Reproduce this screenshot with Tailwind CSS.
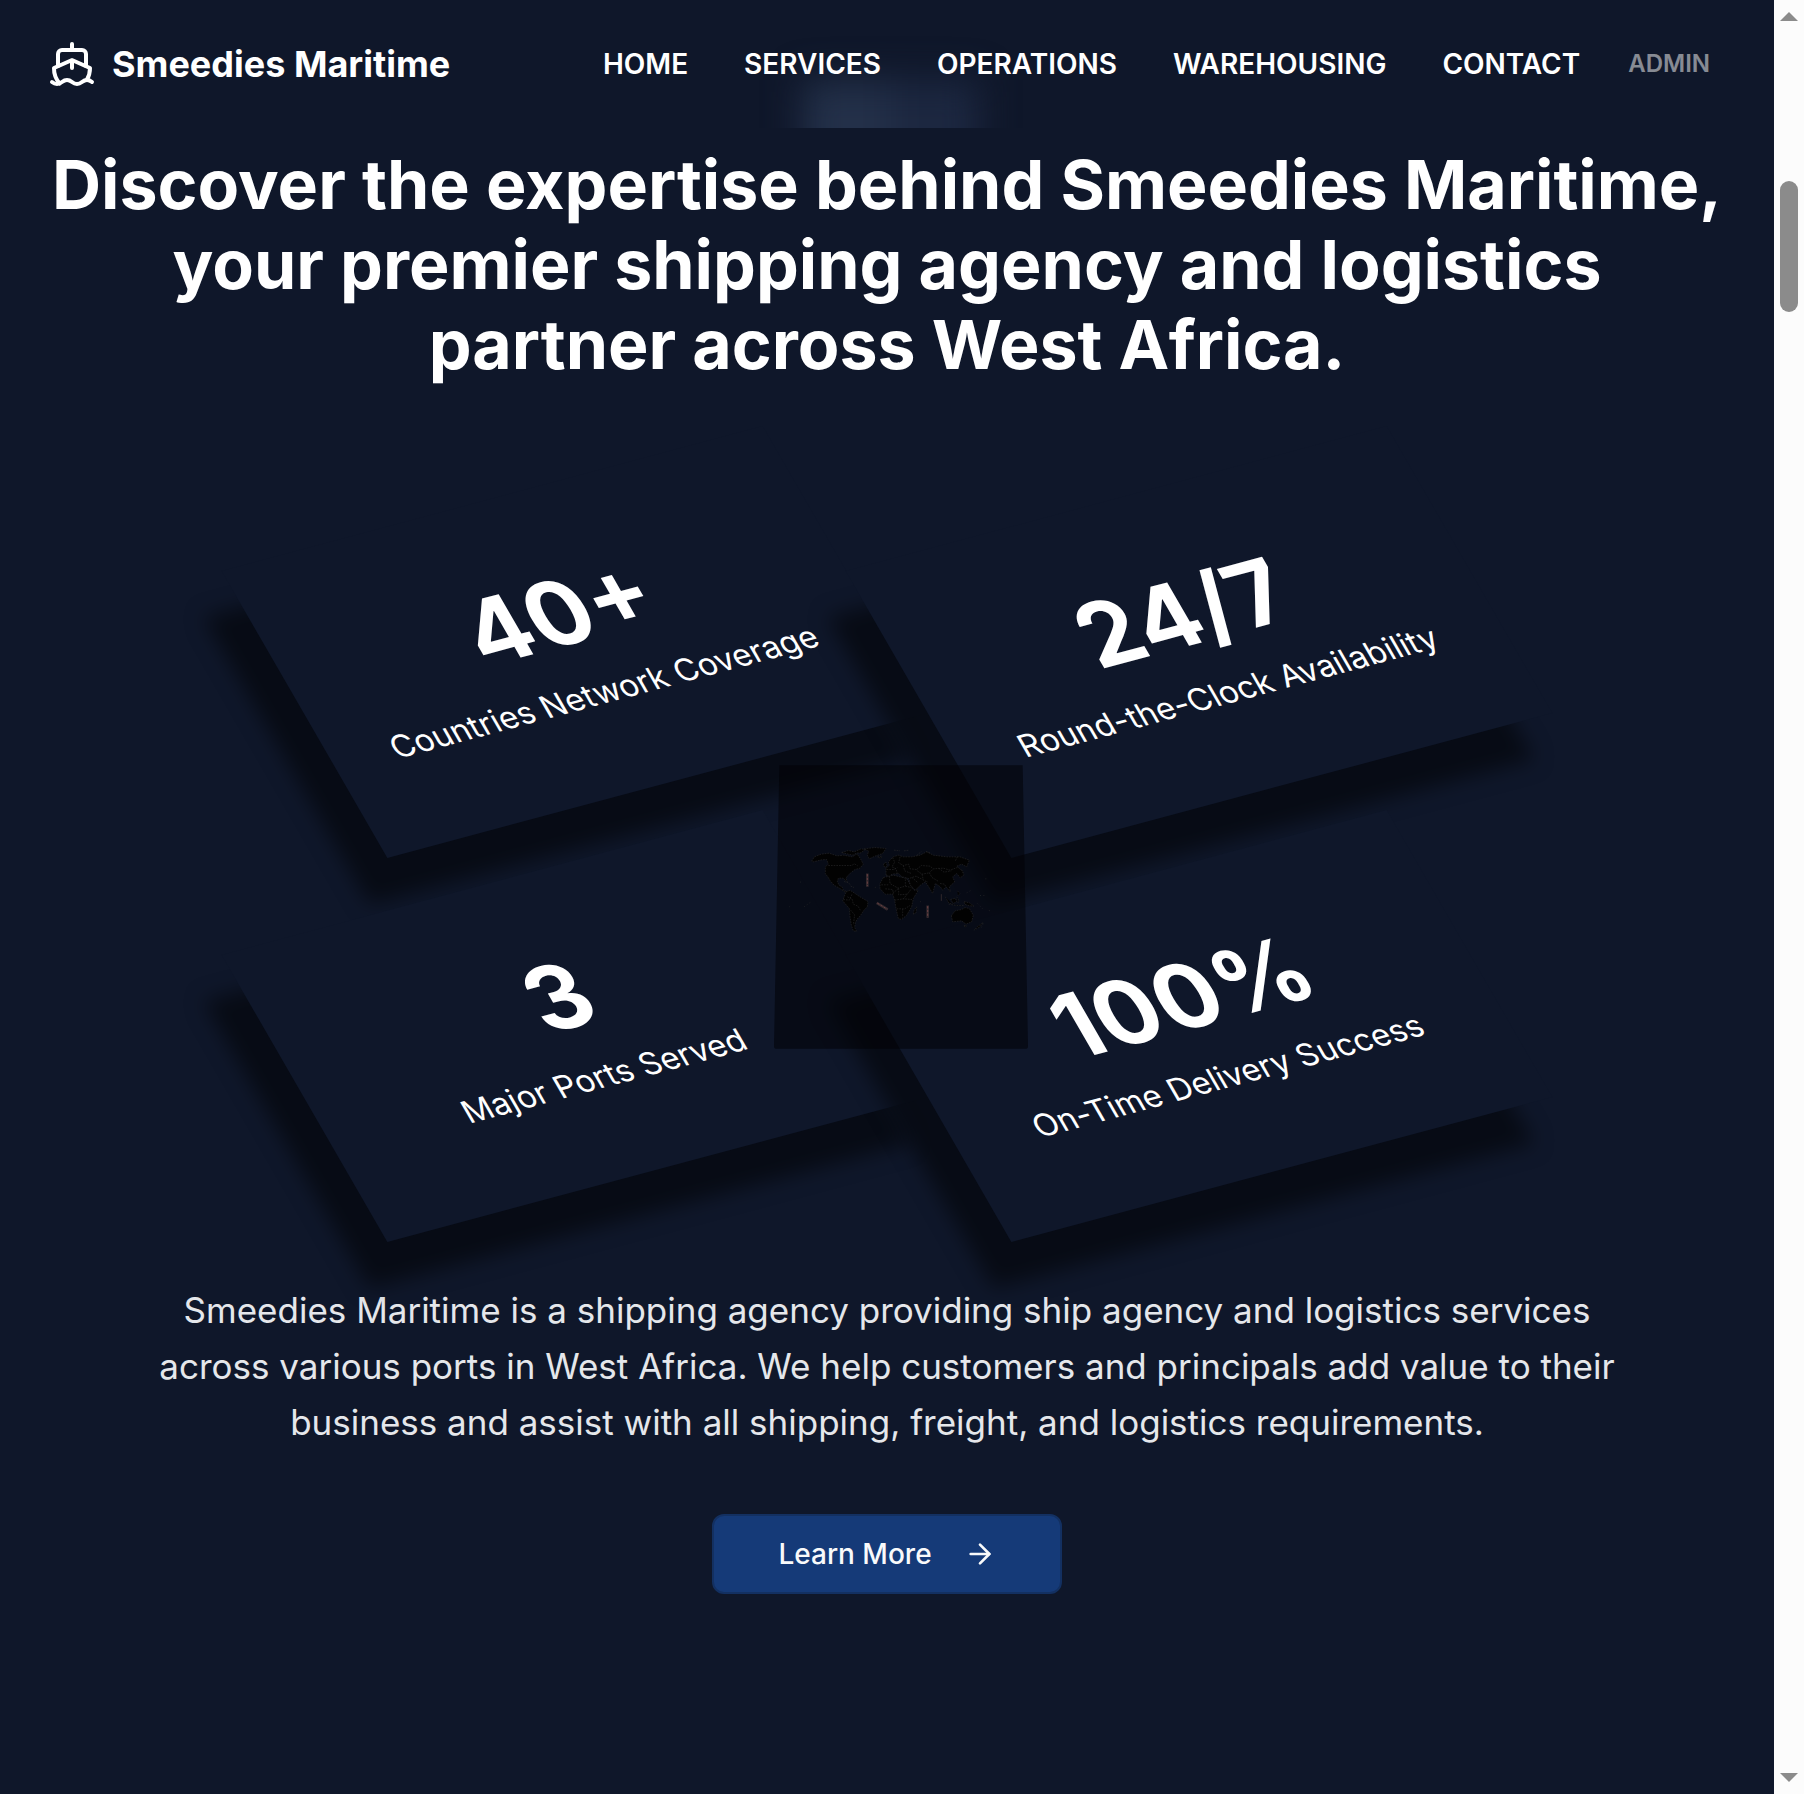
<!DOCTYPE html>
<html lang="en">
<head>
<meta charset="utf-8">
<meta name="viewport" content="width=device-width, initial-scale=1">
<title>Smeedies Maritime</title>
<script src="https://cdn.jsdelivr.net/npm/@tailwindcss/browser@4"></script>
</head>
<body class="flex min-h-screen bg-[#0f172a] font-['Inter',sans-serif] text-white">
<div class="min-w-0 flex-1 overflow-hidden">

  <header class="relative flex h-32 items-center justify-between overflow-hidden pr-16 pl-12">
    <!-- Content scrolled under the bar, seen through its blur -->
    <div class="absolute inset-0 flex items-end justify-center pl-2" aria-hidden="true">
      <div class="flex translate-y-10 blur-[18px]">
        <div class="h-22 w-22 bg-[#233049]"></div>
        <div class="h-22 w-22 bg-[#1c2740]"></div>
      </div>
    </div>
    <a href="#" class="relative flex items-center gap-4 text-4xl font-bold">
      <svg class="size-12" viewBox="0 0 24 24" fill="none" stroke="currentColor" stroke-width="2" stroke-linecap="round" stroke-linejoin="round" aria-hidden="true">
        <path d="M12 10.189V14"/><path d="M12 2v3"/><path d="M19 13V7a2 2 0 0 0-2-2H7a2 2 0 0 0-2 2v6"/>
        <path d="M19.38 20A11.6 11.6 0 0 0 21 14l-8.188-3.639a2 2 0 0 0-1.624 0L3 14a11.6 11.6 0 0 0 2.81 7.76"/>
        <path d="M2 21c.6.5 1.2 1 2.5 1 2.5 0 2.5-2 5-2 1.3 0 1.9.5 2.5 1s1.2 1 2.5 1c2.5 0 2.5-2 5-2 1.3 0 1.9.5 2.5 1"/>
      </svg>
      Smeedies Maritime
    </a>
    <nav class="relative flex items-center gap-14 text-[28px] font-semibold">
      <a href="#">HOME</a>
      <a href="#">SERVICES</a>
      <a href="#">OPERATIONS</a>
      <a href="#">WAREHOUSING</a>
      <div class="flex items-center gap-12">
        <a href="#">CONTACT</a>
        <a href="#" class="text-2xl text-white/50">ADMIN</a>
      </div>
    </nav>
  </header>

  <main class="flex flex-col items-center px-12 pt-4">
    <h1 class="text-center text-[68px] leading-[80px] font-bold">Discover the expertise behind Smeedies Maritime, your premier shipping agency and logistics partner across West Africa.</h1>

    <section class="relative mt-[98px] grid w-full max-w-[1184px] grid-cols-2 gap-16">
      <div class="[transform:rotate(-15deg)_skewX(15deg)] bg-[#0f172a] py-20 text-center shadow-[-40px_40px_20px_rgba(0,0,0,0.5)]">
        <p class="mb-4 text-[92px] leading-[96px] font-bold">40+</p>
        <p class="text-[32px] leading-[48px]">Countries Network Coverage</p>
      </div>
      <div class="[transform:rotate(-15deg)_skewX(15deg)] bg-[#0f172a] py-20 text-center shadow-[-40px_40px_20px_rgba(0,0,0,0.5)]">
        <p class="mb-4 text-[92px] leading-[96px] font-bold">24/7</p>
        <p class="text-[32px] leading-[48px]">Round-the-Clock Availability</p>
      </div>
      <div class="[transform:rotate(-15deg)_skewX(15deg)] bg-[#0f172a] py-20 text-center shadow-[-40px_40px_20px_rgba(0,0,0,0.5)]">
        <p class="mb-4 text-[92px] leading-[96px] font-bold">3</p>
        <p class="text-[32px] leading-[48px]">Major Ports Served</p>
      </div>
      <div class="[transform:rotate(-15deg)_skewX(15deg)] bg-[#0f172a] py-20 text-center shadow-[-40px_40px_20px_rgba(0,0,0,0.5)]">
        <p class="mb-4 text-[92px] leading-[96px] font-bold">100%</p>
        <p class="text-[32px] leading-[48px]">On-Time Delivery Success</p>
      </div>

      <!-- World map panel floating over the cards -->
      <svg class="absolute top-[283px] left-[calc(50%-113px)] h-[284px] w-[254px]" viewBox="42 75 762 851" role="img" aria-label="World map with shipping routes">
        <path d="M58 75H788L804 918Q804 926 796 926H50Q42 926 42 918Z" fill="#010205" fill-opacity=".55"/>
        <g fill="#020202" stroke="#262627" stroke-width="2" stroke-dasharray="5 3">
          <path d="M155 363l8-13 20-8 24-3 24 8 20-2 26 5 14-9 10 14 9 17-10 12-15 4-13 10-10 10-4 7 4 9-7-4-5-6-15 0-3 11 6 11 8 4 4 10 12 5-7 1-15-11-18-10-12-14-7-12-7-8V380l9-8-5-14-15 1-25 6z"/>
          <path d="M205 376h70l8-5 10 6"/>
          <path d="M245 337l20-6 18 4 20-9 12 2-12 10-14 1-10 6-14-3zM312 326l33-4 33 3-10 15-23 8-17 8-6-11 4-12z"/>
          <path d="M258 455l12-5 15 10 15 10 24 14-2 16-10 10-12 18-8 8-6 12-2 14 6 12-10-2-6-17-4-25-2-25-20-23z"/>
          <path d="M262 470l14 6 4 16 14 6 8 14M272 510l12 14-4 30M250 478l18 2 8-18"/>
          <path d="M370 412l30-7 40 10 15 25 7 10h13l-15 25-5 25-15 25-15 13-10-3-7-30-4-25-6-18-23 0-15-17v-15z"/>
          <path d="M388 408l2 22 24 14 22-6V415M364 434h24M398 460l18-16M416 444v20l26-2 12-16M404 480l26-4 26 2M430 476l12-14M410 506h24l16-10M428 506v26M376 446l22 2 2 12M436 438l18 4" fill="none"/>
          <path d="M460 522l2-12 8-10-2 18zM574 527l11-15 20-4 10-6 13 3 12 20-5 20-17 7-13-10-27 3zM668 548l-8 12-18 10 10-10zM612 556l8 0-4 6z"/>
          <path d="M378 405l0-20 10-10-3-10 15-15 15-5 15 5 25 0 25-5 20-10 20 10 40 5 40 0 28 10-8 20-15-8-15 6 20 17-10 17-10-12-12 10 6 15-16 15 3 15-13-15-10 10-7-10-15-10-8 30-12-20-10-15-15 10-15 15-15-15-5-20-20-5-10-10-20 2-8 6z"/>
          <path d="M398 352l6 14-8 14 12 6 4 14M420 350l-4 18 14 8 16-4 4 14 20 2M380 388h22l10-6M430 376l4 16 20 8M470 388l14-12 26 2 10 8 30-2 20 6 22-8M472 392l14 10 22-4 12-12M486 402l4 18 14 6M508 398l8 14 20 12M450 414l18-6 20 10M536 384l16 12 22-4M540 430l14 2 4 10M592 350l-6 12M456 412l16 14" fill="none"/>
          <path d="M556 470l10 18 12 4M572 478l14-4 4 10-10 6zM590 470l6 10-2 8M612 484l16 4 14 10-18-2-10-4zM566 492l24 4 24 0M592 452l8 8-6 6M604 388l8 16-12 10M370 372l8-6 4 12-8 4zM352 350l14-2-4 6z"/>
          <path d="M252 424l14 4 6 8M272 438l10 4M402 330l18 2M432 332l16-2M470 346l14-12M498 334l12 4" fill="none"/>
        </g>
        <g fill="none" stroke="#1c1e22" stroke-width="3" stroke-dasharray="3 7">
          <path d="M120 425l8 4M88 500l8-6M132 500l20-14M620 458l14-8M652 490l16 16M676 416h8M660 466l20 0M688 510v10M346 440v4M664 562l6-12M480 484l6 2"/>
        </g>
        <g stroke="#30282c" stroke-width="8">
          <path d="M322 400v40M350 488l33 20M503 496v37"/><path d="M544 462v20" stroke-width="3"/>
        </g>
        <g stroke="#6a3f42" stroke-width="3" stroke-dasharray="7 4">
          <path d="M322 402v36M352 489l30 18M503 498v34"/>
        </g>
      </svg>
    </section>

    <p class="mt-24 max-w-[1488px] text-center text-[35px] leading-[56px] text-gray-200">Smeedies Maritime is a shipping agency providing ship agency and logistics services across various ports in West Africa. We help customers and principals add value to their business and assist with all shipping, freight, and logistics requirements.</p>

    <button type="button" class="mt-16 flex h-20 items-center gap-8 rounded-xl border-2 border-[#133061] bg-[#153a78] px-16 text-[28px] font-medium text-gray-50">
      Learn More
      <svg class="size-8" viewBox="0 0 24 24" fill="none" stroke="currentColor" stroke-width="2" stroke-linecap="round" stroke-linejoin="round" aria-hidden="true"><path d="M5 12h14"/><path d="m12 5 7 7-7 7"/></svg>
    </button>
  </main>
</div>

<!-- Scroll track -->
<div class="flex w-[30px] shrink-0 flex-col items-start bg-[#fcfcfc] py-3 pl-1.5" aria-hidden="true">
  <svg class="h-[9px] w-[18px]" viewBox="0 0 18 9" fill="#8b8b8b"><path d="M9 0l9 9H0z"/></svg>
  <div class="mt-40 h-[131px] w-[18px] rounded-full bg-[#8b8b8b]"></div>
  <svg class="mt-auto h-[9px] w-[18px]" viewBox="0 0 18 9" fill="#8b8b8b"><path d="M0 0h18L9 9z"/></svg>
</div>
</body>
</html>
